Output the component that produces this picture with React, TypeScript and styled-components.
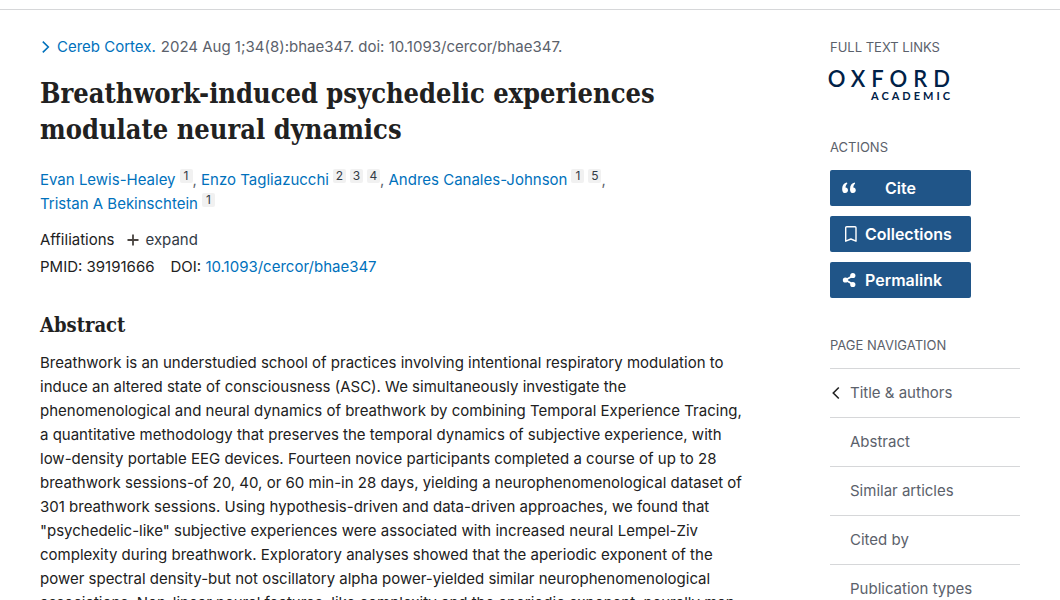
import React from "react";
import styled, { createGlobalStyle } from "styled-components";

const sans = `Inter, "Liberation Sans", sans-serif`;
const serif = `"DejaVu Serif Condensed", "DejaVu Serif", serif`;

const GlobalStyle = createGlobalStyle`
  *, *::before, *::after { box-sizing: border-box; }
  body {
    margin: 0;
    background: #fff;
    color: #212121;
    font: 15px/24px ${sans};
  }
  a { color: #0071bc; text-decoration: none; }
  a:hover { text-decoration: underline; }
`;

const Page = styled.div`
  padding-top: 9px;
`;

const Layout = styled.div`
  display: grid;
  grid-template-columns: minmax(0, 1fr) 190px;
  column-gap: 70px;
  padding: 25px 40px 0;
  border-top: 1px solid #d6d7d9;
`;

const Article = styled.main`
  min-width: 0;
`;

const Citation = styled.div`
  display: flex;
  align-items: center;
  gap: 5px;
  color: #5b616b;
`;

const JournalButton = styled.button`
  display: flex;
  align-items: center;
  gap: 5px;
  padding: 0;
  border: 0;
  background: none;
  color: #0071bc;
  font: inherit;
  cursor: pointer;
`;

const Title = styled.h1`
  margin: 17px 0 0;
  font: bold 27px/36px ${serif};
`;

const Authors = styled.div`
  margin-top: 20px;
  color: #5b616b;
`;

const Mark = styled.a`
  && { color: #323a45; }
  display: inline-block;
  min-width: 13px;
  height: 14px;
  margin-left: 4px;
  border-radius: 2px;
  background: #f1f1f1;
  font-size: 12px;
  line-height: 14px;
  text-align: center;
  vertical-align: 5px;
`;

const Row = styled.div<{ $gap: number; $top: number }>`
  display: flex;
  align-items: center;
  gap: ${(p) => p.$gap}px;
  margin-top: ${(p) => p.$top}px;
`;

const ExpandButton = styled.button`
  display: flex;
  align-items: center;
  gap: 7px;
  padding: 0;
  border: 0;
  background: none;
  color: #323a45;
  font: inherit;
  cursor: pointer;
`;

const SectionTitle = styled.h2`
  margin: 31px 0 0;
  font: bold 20px/30px ${serif};
`;

const Abstract = styled.p`
  margin: 11px 0 0;
  white-space: nowrap;
`;

const Sidebar = styled.aside`
  display: flex;
  flex-direction: column;
  color: #5b616b;
`;

const SideTitle = styled.h3<{ $top: number }>`
  margin: ${(p) => p.$top}px 0 0;
  font: 400 13px/20px ${sans};
  text-transform: uppercase;
`;

const Publisher = styled.a`
  && { color: #002147; }
  display: flex;
  flex-direction: column;
  align-items: flex-end;
  width: 126px;
  margin-top: 12px;
  font-family: Lato, sans-serif;
`;

const PublisherName = styled.span`
  font-size: 22px;
  line-height: 20px;
  letter-spacing: 6px;
  font-weight: 600;
`;

const PublisherUnit = styled.span`
  padding-right: 3px;
  font-size: 11px;
  line-height: 14px;
  letter-spacing: 3px;
  font-weight: 700;
`;

const Actions = styled.div`
  display: flex;
  flex-direction: column;
  gap: 10px;
  width: 141px;
  margin-top: 13px;
`;

const ActionButton = styled.button<{ $center?: boolean }>`
  display: grid;
  grid-template-columns: 16px 1fr;
  column-gap: 8px;
  align-items: center;
  height: 36px;
  padding: 0 ${(p) => (p.$center ? 35 : 11)}px 0 11px;
  border: 0;
  border-radius: 2px;
  background: #205588;
  color: #fff;
  font: 600 16px/24px ${sans};
  text-align: ${(p) => (p.$center ? "center" : "left")};
  cursor: pointer;
`;

const NavList = styled.ul`
  margin: 13px 0 0;
  padding: 0;
  list-style: none;
`;

const NavItem = styled.li`
  border-top: 1px solid #d6d7d9;
`;

const NavLink = styled.a`
  && { color: #5b616b; }
  display: grid;
  grid-template-columns: 12px 1fr;
  column-gap: 8px;
  align-items: center;
  height: 48px;
`;

const Label = styled.span`
  grid-column: 2;
`;

const authors = [
  { name: "Evan Lewis-Healey", marks: [1] },
  { name: "Enzo Tagliazucchi", marks: [2, 3, 4] },
  { name: "Andres Canales-Johnson", marks: [1, 5] },
  { name: "Tristan A Bekinschtein", marks: [1] },
];

const abstractLines = [
  "Breathwork is an understudied school of practices involving intentional respiratory modulation to",
  "induce an altered state of consciousness (ASC). We simultaneously investigate the",
  "phenomenological and neural dynamics of breathwork by combining Temporal Experience Tracing,",
  "a quantitative methodology that preserves the temporal dynamics of subjective experience, with",
  "low-density portable EEG devices. Fourteen novice participants completed a course of up to 28",
  "breathwork sessions-of 20, 40, or 60 min-in 28 days, yielding a neurophenomenological dataset of",
  "301 breathwork sessions. Using hypothesis-driven and data-driven approaches, we found that",
  "\"psychedelic-like\" subjective experiences were associated with increased neural Lempel-Ziv",
  "complexity during breathwork. Exploratory analyses showed that the aperiodic exponent of the",
  "power spectral density-but not oscillatory alpha power-yielded similar neurophenomenological",
  "associations. Non-linear neural features, like complexity and the aperiodic exponent, neurally map",
];

const sections = ["Title & authors", "Abstract", "Similar articles", "Cited by", "Publication types"];

const ChevronRight = () => (
  <svg width="12" height="14" viewBox="0 0 12 14" fill="none" stroke="#0071bc" strokeWidth="1.6" aria-hidden="true">
    <path d="M2.800 1.700 8.300 7l-5.500 5.300" />
  </svg>
);

const ChevronLeft = () => (
  <svg width="12" height="14" viewBox="0 0 12 14" fill="none" stroke="#212121" strokeWidth="1.6" aria-hidden="true">
    <path d="M8.800 1.500 3.300 7l5.500 5.500" />
  </svg>
);

const Plus = () => (
  <svg width="12" height="12" viewBox="0 0 12 12" fill="none" stroke="#494440" strokeWidth="1.800" aria-hidden="true">
    <path d="M6 0.500v11M0.500 6h11" />
  </svg>
);

const QuoteIcon = () => (
  <svg width="16" height="16" viewBox="0 0 16 16" fill="#fff" aria-hidden="true">
    <path d="M6 2.600C3 3 1.200 5.400 1.200 9.400c0 2.300 1.200 3.700 3 3.700 1.600 0 2.800-1.200 2.800-2.800 0-1.500-1-2.600-2.500-2.700C4.600 6.100 5 4.600 6.300 3.800Z" />
    <path d="M13.800 2.600C10.800 3 9 5.400 9 9.400c0 2.300 1.200 3.700 3 3.700 1.600 0 2.800-1.200 2.800-2.800 0-1.500-1-2.600-2.500-2.700.1-1.500.5-3 1.800-3.800Z" />
  </svg>
);

const BookmarkIcon = () => (
  <svg width="16" height="18" viewBox="0 0 16 18" fill="none" stroke="#fff" strokeWidth="1.400" strokeLinejoin="round" aria-hidden="true">
    <path d="M5.700 1.700h8.300a1 1 0 0 1 1 1v13.500L9.900 14 4.700 16.200V2.700a1 1 0 0 1 1-1Z" />
  </svg>
);

const ShareIcon = () => (
  <svg width="16" height="16" viewBox="0 0 16 16" fill="#fff" stroke="#fff" aria-hidden="true">
    <path d="M12 3.800 4.500 8l7.500 4.200" fill="none" strokeWidth="1.800" />
    <g stroke="none">
      <circle cx="11.800" cy="3.500" r="2.600" />
      <circle cx="4.400" cy="8" r="2.600" />
      <circle cx="11.800" cy="12.500" r="2.600" />
    </g>
  </svg>
);

export default function App() {
  return (
    <Page>
      <GlobalStyle />
      <Layout>
        <Article>
          <Citation>
            <JournalButton type="button">
              <ChevronRight />
              Cereb Cortex.
            </JournalButton>
            <span>2024 Aug 1;34(8):bhae347. doi: 10.1093/cercor/bhae347.</span>
          </Citation>
          <Title>
            Breathwork-induced psychedelic experiences
            <br />
            modulate neural dynamics
          </Title>
          <Authors>
            {authors.map((author, i) => (
              <React.Fragment key={author.name}>
                <a href="#author">{author.name}</a>
                {author.marks.map((mark) => (
                  <Mark key={mark} href={`#affiliation-${mark}`}>{mark}</Mark>
                ))}
                {i < authors.length - 1 && ", "}
                {i === 2 && <br />}
              </React.Fragment>
            ))}
          </Authors>
          <Row $gap={12} $top={12}>
            Affiliations
            <ExpandButton type="button">
              <Plus />
              expand
            </ExpandButton>
          </Row>
          <Row $gap={16} $top={3}>
            <span>PMID: 39191666</span>
            <span>
              DOI: <a href="#doi">10.1093/cercor/bhae347</a>
            </span>
          </Row>
          <SectionTitle>Abstract</SectionTitle>
          <Abstract>
            {abstractLines.map((line) => (
              <React.Fragment key={line}>
                {line}
                <br />
              </React.Fragment>
            ))}
          </Abstract>
        </Article>
        <Sidebar>
          <SideTitle $top={2}>Full text links</SideTitle>
          <Publisher href="#full-text">
            <PublisherName>OXFORD</PublisherName>
            <PublisherUnit>ACADEMIC</PublisherUnit>
          </Publisher>
          <SideTitle $top={34}>Actions</SideTitle>
          <Actions>
            <ActionButton type="button" $center>
              <QuoteIcon />
              <span>Cite</span>
            </ActionButton>
            <ActionButton type="button">
              <BookmarkIcon />
              <span>Collections</span>
            </ActionButton>
            <ActionButton type="button">
              <ShareIcon />
              <span>Permalink</span>
            </ActionButton>
          </Actions>
          <SideTitle $top={37}>Page navigation</SideTitle>
          <NavList>
            {sections.map((section, i) => (
              <NavItem key={section}>
                <NavLink href="#section">
                  {i === 0 && <ChevronLeft />}
                  <Label>{section}</Label>
                </NavLink>
              </NavItem>
            ))}
          </NavList>
        </Sidebar>
      </Layout>
    </Page>
  );
}
